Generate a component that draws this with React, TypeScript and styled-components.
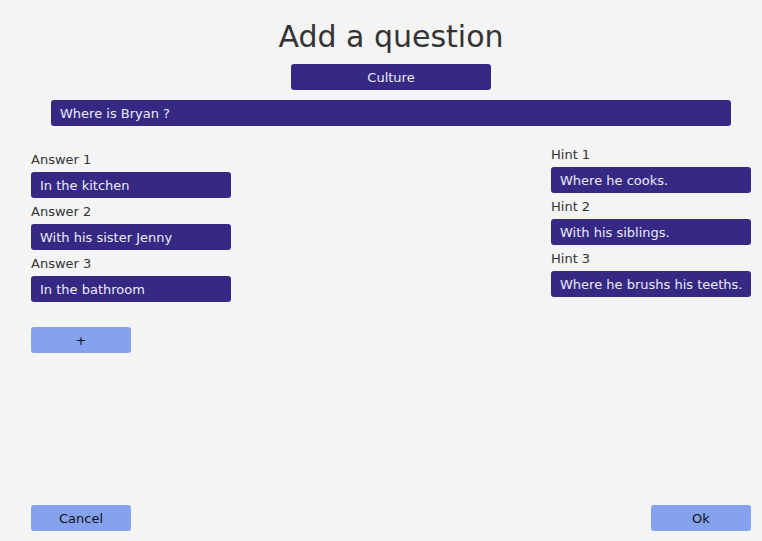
import React from "react";
import styled, { createGlobalStyle } from "styled-components";

const Global = createGlobalStyle`
  html, body { margin: 0; padding: 0; background: #f4f4f4; overflow: hidden; }
  * { box-sizing: border-box; }
  body { font-family: "DejaVu Sans", Verdana, sans-serif; }
`;

const Page = styled.div`
  min-height: 100vh;
  display: flex;
  flex-direction: column;
  padding: 19px 11px 10px 31px;
`;

const Header = styled.div`
  display: flex;
  flex-direction: column;
  align-items: center;
`;

const Title = styled.h1`
  margin: 0;
  font-size: 30px;
  line-height: 35px;
  font-weight: 400;
  color: #333333;
`;

const Pill = styled.div<{ $w: number; $center?: boolean; $mt?: number }>`
  width: ${(p) => p.$w}px;
  height: 26px;
  margin-top: ${(p) => p.$mt ?? 0}px;
  background: #362984;
  color: #ecebf5;
  border-radius: 3px;
  font-size: 13px;
  line-height: 25px;
  padding: 1px 9px 0;
  text-align: ${(p) => (p.$center ? "center" : "left")};
  white-space: nowrap;
  overflow: hidden;
`;

const Columns = styled.div`
  margin-top: 21px;
  display: flex;
  justify-content: space-between;
  align-items: flex-start;
`;

const Column = styled.div<{ $pt: number }>`
  width: 200px;
  padding-top: ${(p) => p.$pt}px;
  display: flex;
  flex-direction: column;
  gap: 6px;
`;

const Group = styled.div`
  display: flex;
  flex-direction: column;
`;

const Label = styled.div`
  font-size: 13px;
  line-height: 15px;
  color: #333333;
  margin-bottom: 5px;
`;

const Button = styled.button<{ $mt?: number }>`
  width: 100px;
  height: 26px;
  margin-top: ${(p) => p.$mt ?? 0}px;
  border: none;
  border-radius: 3px;
  background: #85a2ee;
  color: #111111;
  font-family: "DejaVu Sans", Verdana, sans-serif;
  font-size: 13px;
  line-height: 25px;
  padding: 1px 0 0;
  cursor: pointer;
`;

const Spacer = styled.div`
  flex: 1;
`;

const Footer = styled.div`
  display: flex;
  justify-content: space-between;
`;

const answers = ["In the kitchen", "With his sister Jenny", "In the bathroom"];
const hints = ["Where he cooks.", "With his siblings.", "Where he brushs his teeths."];

export default function App() {
  return (
    <>
      <Global />
      <Page>
        <Header>
          <Title>Add a question</Title>
          <Pill $w={200} $center $mt={10}>Culture</Pill>
          <Pill $w={680} $mt={10}>Where is Bryan ?</Pill>
        </Header>
        <Columns>
          <Column $pt={5}>
            {answers.map((a, i) => (
              <Group key={a}>
                <Label>Answer {i + 1}</Label>
                <Pill $w={200}>{a}</Pill>
              </Group>
            ))}
            <Button $mt={19}>+</Button>
          </Column>
          <Column $pt={0}>
            {hints.map((h, i) => (
              <Group key={h}>
                <Label>Hint {i + 1}</Label>
                <Pill $w={200}>{h}</Pill>
              </Group>
            ))}
          </Column>
        </Columns>
        <Spacer />
        <Footer>
          <Button>Cancel</Button>
          <Button>Ok</Button>
        </Footer>
      </Page>
    </>
  );
}
